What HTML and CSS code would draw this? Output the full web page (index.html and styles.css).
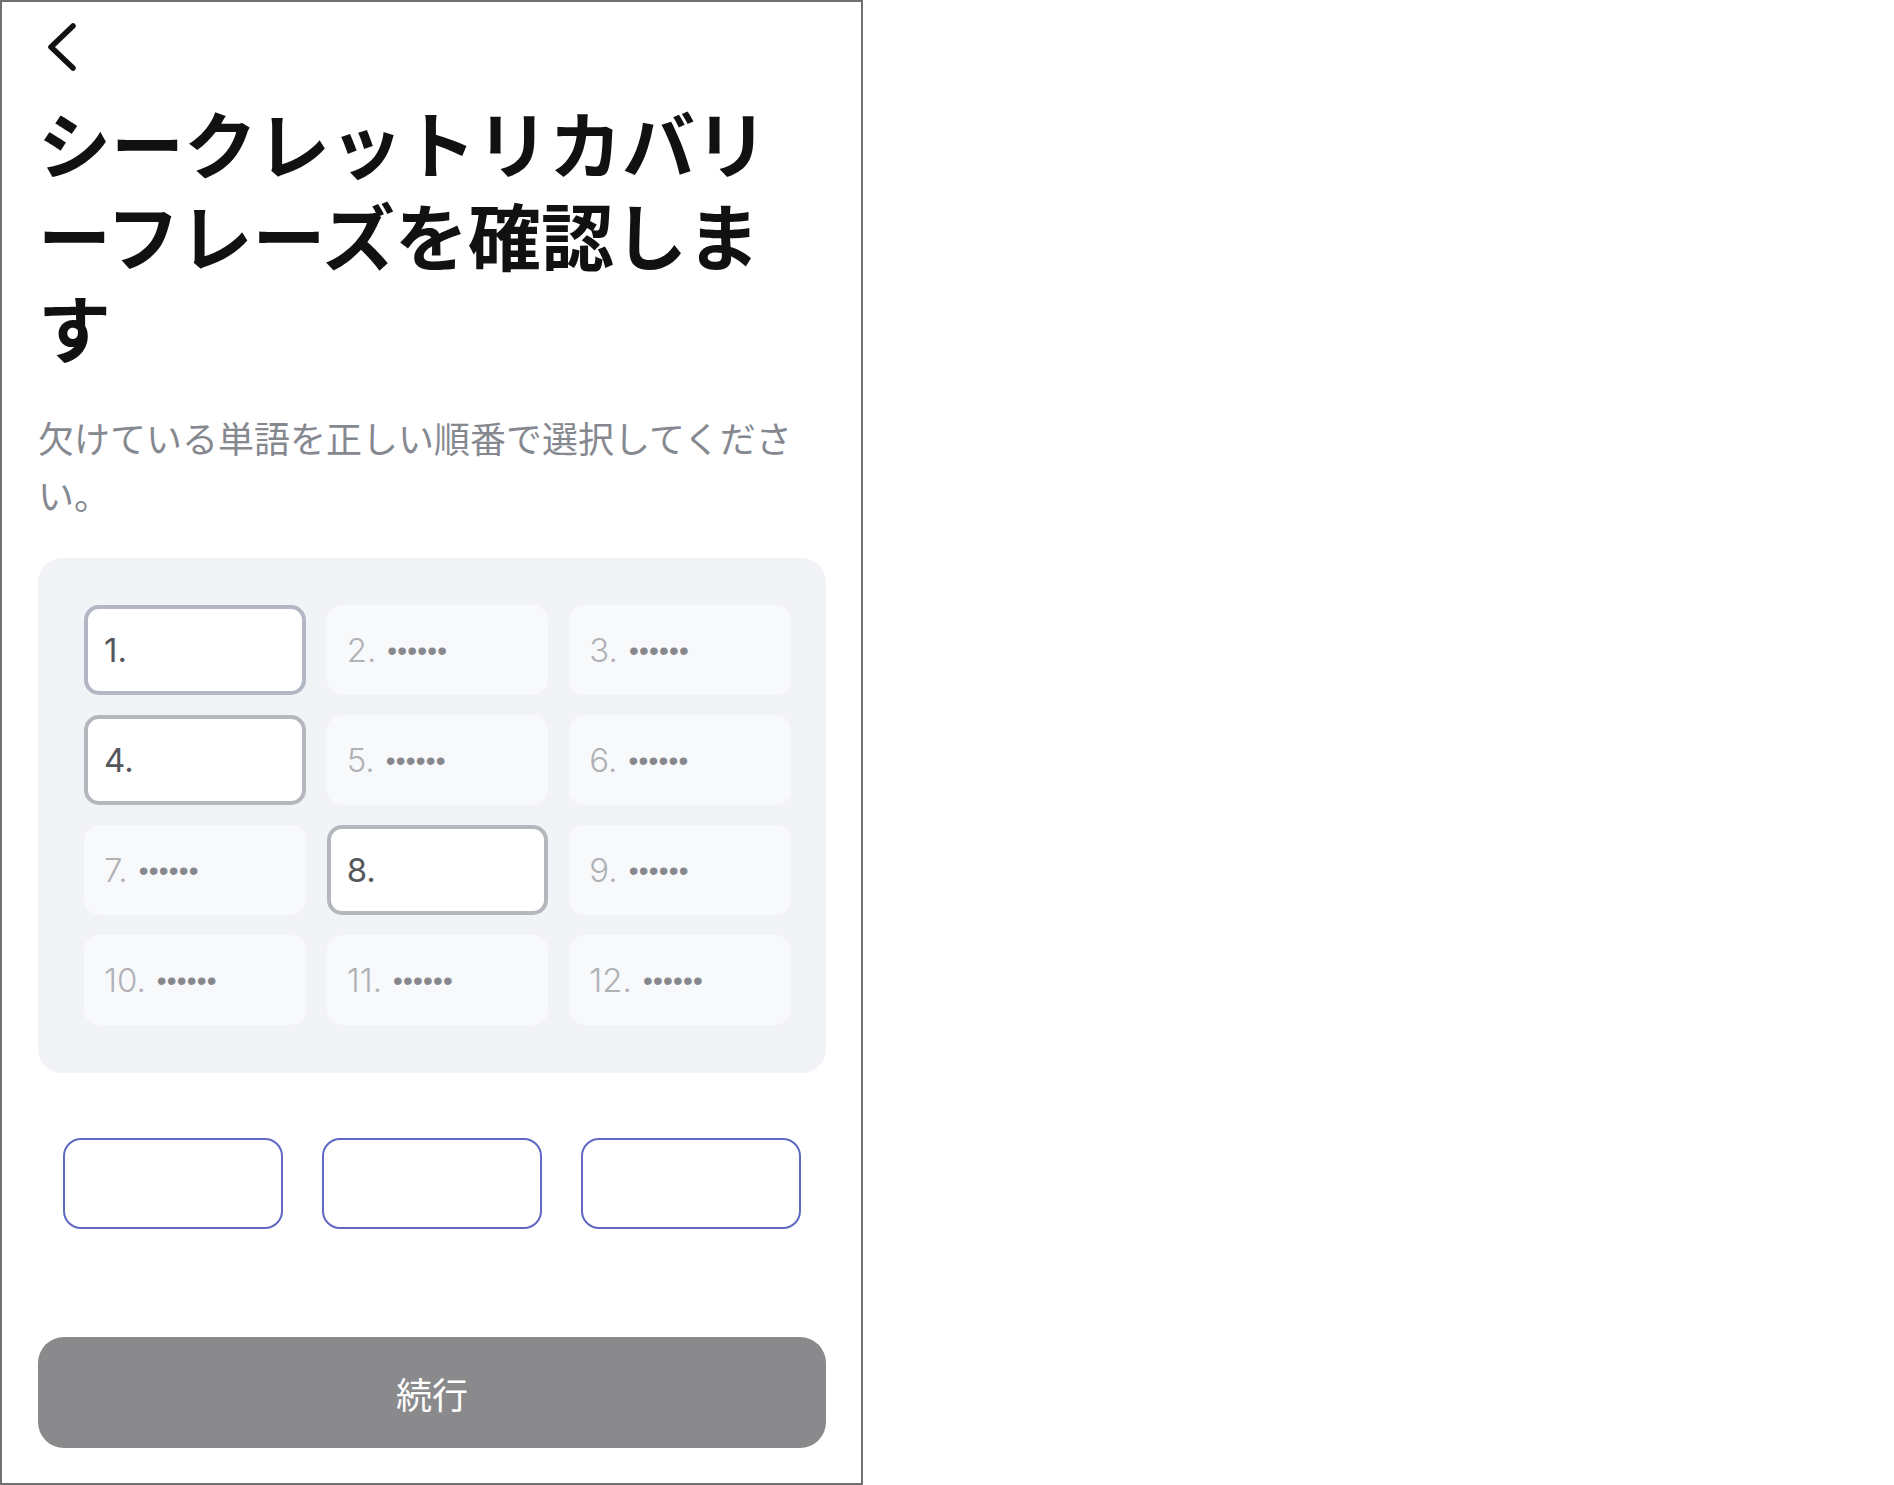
FILE: index.html
```html
<!DOCTYPE html>
<html lang="ja">
<head>
<meta charset="utf-8">
<title>シークレットリカバリーフレーズを確認します</title>
<link rel="stylesheet" href="styles.css">
</head>
<body>
<div class="phone">
  <div class="screen">
    <div class="header">
      <svg class="back" width="40" height="50" viewBox="0 0 40 50" aria-label="戻る">
        <path d="M30 4 L8 25 L30 46" fill="none" stroke="#111" stroke-width="5.5" stroke-linecap="round" stroke-linejoin="round"/>
      </svg>
    </div>
    <h1 class="title">シークレットリカバリーフレーズを確認します</h1>
    <p class="subtitle">欠けている単語を正しい順番で選択してください。</p>

    <div class="panel">
      <div class="cell selected first"><span class="num">1.</span></div>
      <div class="cell"><span class="num">2.</span><span class="dots">••••••</span></div>
      <div class="cell"><span class="num">3.</span><span class="dots">••••••</span></div>
      <div class="cell selected"><span class="num">4.</span></div>
      <div class="cell"><span class="num">5.</span><span class="dots">••••••</span></div>
      <div class="cell"><span class="num">6.</span><span class="dots">••••••</span></div>
      <div class="cell"><span class="num">7.</span><span class="dots">••••••</span></div>
      <div class="cell selected"><span class="num">8.</span></div>
      <div class="cell"><span class="num">9.</span><span class="dots">••••••</span></div>
      <div class="cell"><span class="num">10.</span><span class="dots">••••••</span></div>
      <div class="cell"><span class="num">11.</span><span class="dots">••••••</span></div>
      <div class="cell"><span class="num">12.</span><span class="dots">••••••</span></div>
    </div>

    <div class="slots">
      <div class="slot"></div>
      <div class="slot"></div>
      <div class="slot"></div>
    </div>

    <button class="continue">続行</button>
  </div>
</div>
</body>
</html>
```

FILE: styles.css
```css
html, body {
  margin: 0;
  padding: 0;
  background: #ffffff;
}

body {
  font-family: "Noto Sans CJK JP", "Noto Sans", sans-serif;
}

.phone {
  width: 863px;
  height: 1485px;
  box-sizing: border-box;
  border: 2px solid #707070;
  background: #ffffff;
}

.screen {
  padding: 0 35px 0 36px;
  display: flex;
  flex-direction: column;
}

.header {
  padding-top: 20px;
  height: 50px;
}

.back {
  display: block;
  margin-left: 5px;
}

.title {
  margin: 23px 0 0 0;
  font-family: "Noto Sans CJK JP", sans-serif;
  font-weight: 700;
  font-size: 73px;
  line-height: 92px;
  color: #111111;
}

.subtitle {
  margin: 38px 0 0 0;
  font-family: "Noto Sans CJK JP", sans-serif;
  font-weight: 400;
  font-size: 36px;
  line-height: 57px;
  color: #86888f;
}

.panel {
  margin-top: 35px;
  background: #f2f3f7;
  border-radius: 24px;
  padding: 47px 35px 48px 46px;
  display: grid;
  grid-template-columns: repeat(3, 1fr);
  grid-auto-rows: 90px;
  column-gap: 21px;
  row-gap: 20px;
}

.cell {
  box-sizing: border-box;
  background: #f8f9fb;
  border: 4px solid transparent;
  border-radius: 15px;
  padding-left: 16px;
  display: flex;
  align-items: center;
  gap: 11px;
  font-family: "Inter", "Liberation Sans", sans-serif;
}

.cell.selected {
  background: #ffffff;
  border-color: #b5b7be;
}

.cell.first {
  border-color: #b2b6c5;
}

.num {
  font-size: 33px;
  font-weight: 300;
  color: #b0b1b5;
}

.selected .num {
  font-weight: 400;
  color: #55575d;
}

.dots {
  font-family: "Liberation Sans", sans-serif;
  font-size: 28px;
  letter-spacing: 0.2px;
  color: #87888d;
  position: relative;
  top: 1px;
}

.slots {
  margin-top: 65px;
  padding: 0 25px 0 25px;
  display: grid;
  grid-template-columns: repeat(3, 1fr);
  column-gap: 39px;
}

.slot {
  height: 91px;
  box-sizing: border-box;
  border: 2px solid #6068c2;
  border-radius: 18px;
  background: #ffffff;
}

.continue {
  margin-top: 108px;
  height: 111px;
  border: none;
  border-radius: 26px;
  background: #8a8a8c;
  color: #ffffff;
  font-family: "Noto Sans CJK JP", sans-serif;
  font-size: 36px;
  font-weight: 400;
  padding: 0;
}
```
